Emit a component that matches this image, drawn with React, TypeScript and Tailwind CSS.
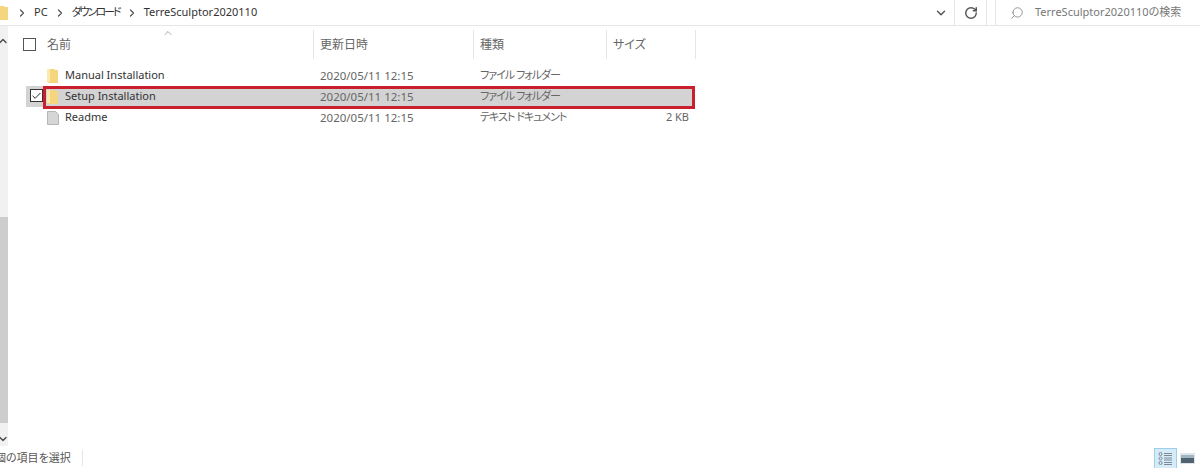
import { Check, ChevronDown, ChevronRight, ChevronUp, RotateCw, Search } from "lucide-react";

const FONT = { fontFamily: '"Noto Sans", "Noto Sans CJK JP", sans-serif' };

const COLUMNS = [
  { label: "更新日時", width: "w-[160px]" },
  { label: "種類", width: "w-[133px]" },
  { label: "サイズ", width: "w-[89px]" },
];

const ROWS = [
  { name: "Manual Installation", kind: "ファイル フォルダー", size: "", icon: "folder" },
  { name: "Setup Installation", kind: "ファイル フォルダー", size: "", icon: "folder", selected: true },
  { name: "Readme", kind: "テキスト ドキュメント", size: "2 KB", icon: "file" },
];

function FolderIcon() {
  return (
    <svg width="11" height="16" viewBox="0 0 11 16" className="shrink-0">
      <path d="M0 1h7l1 1h3v13H1.5L0 14z" fill="#f5d67e" />
      <path d="M0 1h3v13H0z" fill="#fbe9ae" />
    </svg>
  );
}

function FileIcon() {
  return (
    <svg width="12" height="14" viewBox="0 0 12 14" className="shrink-0">
      <path d="M.5.5h8l3 3v10H.5z" fill="#d6d6d6" stroke="#b5b5b5" />
    </svg>
  );
}

function Crumb({ label, narrow }: { label: string; narrow?: boolean }) {
  return (
    <>
      <ChevronRight className="size-3 shrink-0 text-[#555]" strokeWidth={2.5} />
      <span className={narrow ? "tracking-[-2px]" : ""}>{label}</span>
    </>
  );
}

function DetailsViewIcon() {
  return (
    <svg width="23" height="21" viewBox="0 0 23 21">
      <rect x=".5" y=".5" width="22" height="20" fill="#d5ebf8" stroke="#9ccfec" />
      <g fill="none" stroke="#7b8a96">
        <circle cx="6.5" cy="6" r="1.5" />
        <circle cx="6.5" cy="10.5" r="1.5" />
        <circle cx="6.5" cy="15" r="1.5" />
        <path d="M10 5.5h8M10 7.5h8M10 10h8M10 12h8M10 14.5h8M10 16.5h8" />
      </g>
    </svg>
  );
}

export default function App() {
  return (
    <div className="flex h-[468px] w-[1200px] flex-col overflow-hidden bg-white text-[11px] text-[#4a4a4a] [font-feature-settings:'palt']" style={FONT}>
      <header className="flex h-[26px] shrink-0 items-center border-b border-[#e6e6e6]">
        <div className="flex h-full flex-1 items-center">
          <div className="-ml-[3px] mr-[8px]"><FolderIcon /></div>
          <div className="flex items-center gap-[6px] text-[#333]">
            <Crumb label="PC" />
            <Crumb label="ダウンロード" narrow />
            <Crumb label="TerreSculptor2020110" />
          </div>
        </div>
        <div className="flex h-full w-[31px] items-center justify-center border-r border-[#e6e6e6] pl-[3px]">
          <ChevronDown className="size-3.5 text-[#555]" strokeWidth={2.5} />
        </div>
        <div className="flex h-full w-[32px] items-center justify-center border-r border-[#e6e6e6]">
          <RotateCw className="size-3.5 text-[#555]" strokeWidth={2.5} />
        </div>
        <div className="ml-2 flex h-full w-[205px] items-center border-l border-[#e6e6e6] pl-[14px] text-[#777]">
          <Search className="size-[14px] -scale-x-100 text-[#888]" strokeWidth={1.5} />
          <span className="ml-[11px] whitespace-nowrap">TerreSculptor2020110の検索</span>
        </div>
      </header>

      <div className="flex min-h-0 flex-1">
        <div className="flex w-2 shrink-0 flex-col bg-[#f1f1f1]">
          <ChevronUp className="-ml-[3px] mt-[9px] size-3 shrink-0 text-[#444]" strokeWidth={2.5} />
          <div className="mt-[170px] h-[206px] shrink-0 bg-[#cdcdcd]" />
          <ChevronDown className="-ml-[3px] mt-[10px] size-3 shrink-0 text-[#444]" strokeWidth={2.5} />
        </div>

        <main className="min-w-0 flex-1 pl-[15px]">
          <div className="relative flex h-[38px] w-[674px] pt-[4px] text-[12px]">
            <ChevronUp className="absolute left-[139px] top-[1px] size-3 text-[#888]" strokeWidth={1.5} />
            <div className="flex h-[29px] w-[291px] items-center border-r border-[#e6e6e6]">
              <span className="size-[13px] border border-[#555]" />
              <span className="ml-[11px] text-[#666]">名前</span>
            </div>
            {COLUMNS.map((column) => (
              <div key={column.label} className={`flex h-[29px] items-center border-r border-[#e6e6e6] pl-[6px] text-[#666] ${column.width}`}>
                {column.label}
              </div>
            ))}
          </div>

          <div className="ml-[3px] w-[667px] pt-[1px]">
            {ROWS.map((row) => (
              <div key={row.name} className={`relative flex h-[21px] items-center ${row.selected ? "bg-[#d3d3d3]" : ""}`}>
                {row.selected && (
                  <>
                    <span className="absolute left-[4px] top-[3px] flex size-[13px] items-center justify-center border border-[#333] bg-white">
                      <Check className="size-3 text-[#111]" strokeWidth={2} />
                    </span>
                    <span className="absolute -bottom-[2px] left-[17px] -right-[2px] top-0 border-[3px] border-[#c8202c]" />
                  </>
                )}
                <div className="ml-[21px] flex w-[268px] shrink-0 items-center">
                  {row.icon === "folder" ? <FolderIcon /> : <FileIcon />}
                  <span className={`text-[#333] ${row.icon === "folder" ? "ml-[7px]" : "ml-[6px]"}`}>{row.name}</span>
                </div>
                <span className="w-[160px] shrink-0 pl-[5px] text-[11.5px] text-[#666]">2020/05/11 12:15</span>
                <span className="w-[133px] shrink-0 pl-[5px] tracking-[-1px] whitespace-nowrap text-[#666]">{row.kind}</span>
                <span className="w-[81px] shrink-0 text-right text-[#666]">{row.size}</span>
              </div>
            ))}
          </div>
        </main>
      </div>

      <footer className="flex h-[22px] shrink-0 items-center pt-[2px] text-[11px] text-[#555]">
        <span className="-ml-[5px] whitespace-nowrap border-r border-[#e6e6e6] pr-[11px] [font-feature-settings:'normal']">個の項目を選択</span>
        <div className="ml-auto flex items-start gap-[3px] pr-[5px]">
          <DetailsViewIcon />
          <svg width="15" height="11" viewBox="0 0 15 11" className="mt-[5px]">
            <rect width="15" height="11" fill="#dfe5e8" />
            <rect x="1" y="2" width="13" height="4" fill="#9fb6c2" />
            <rect x="1" y="5" width="13" height="5" fill="#4f6470" />
          </svg>
        </div>
      </footer>
    </div>
  );
}
